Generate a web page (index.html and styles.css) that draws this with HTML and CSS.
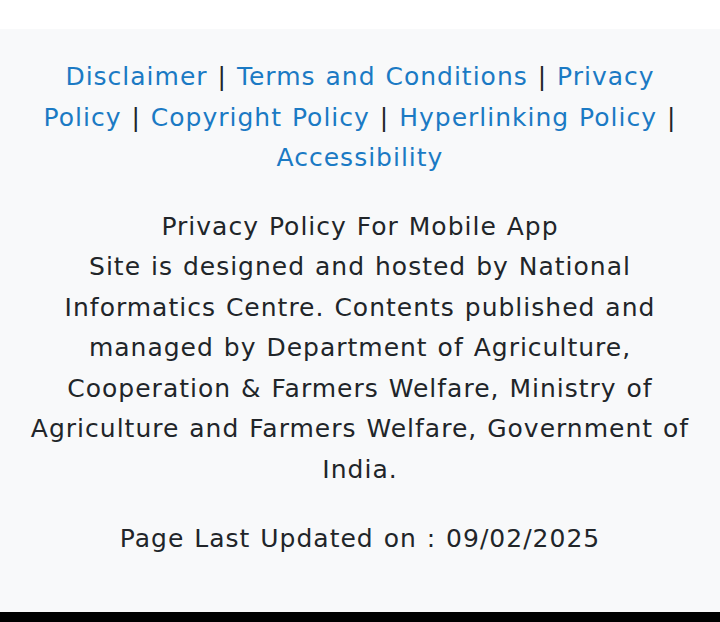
FILE: index.html
```html
<!DOCTYPE html>
<html lang="en">
<head>
<meta charset="utf-8">
<title>Footer</title>
<link rel="stylesheet" href="styles.css">
</head>
<body>
<div class="topband"></div>
<footer class="footer">
  <p class="links">
    <a href="#">Disclaimer</a> | <a href="#">Terms and Conditions</a> | <a href="#">Privacy Policy</a> | <a href="#">Copyright Policy</a> | <a href="#">Hyperlinking Policy</a> | <a href="#">Accessibility</a>
  </p>
  <p class="about">
    Privacy Policy For Mobile App<br>
    Site is designed and hosted by National Informatics Centre. Contents published and managed by Department of Agriculture, Cooperation &amp; Farmers Welfare, Ministry of Agriculture and Farmers Welfare, Government of India.
  </p>
  <p class="updated">Page Last Updated on : 09/02/2025</p>
</footer>
<div class="bottombar"></div>
</body>
</html>
```
FILE: styles.css
```css
html, body {
  margin: 0;
  padding: 0;
  background: #ffffff;
}
body {
  font-family: "DejaVu Sans", "Open Sans", sans-serif;
  color: #212529;
  height: 100vh;
  display: flex;
  flex-direction: column;
}
.topband {
  flex: none;
  height: 29px;
  background: #ffffff;
}
.footer {
  flex: 1;
  background: #f8f9fa;
  padding: 28px 22px 10px;
  text-align: center;
  font-size: 25px;
  line-height: 40.5px;
  letter-spacing: 1px;
  word-spacing: 1px;
}
.footer p {
  margin: 0 0 28px;
}
.footer .updated {
  margin: 29px 0 0;
}
.links {
  color: #212529;
}
.links a {
  color: #1b7ac4;
  text-decoration: none;
}
.bottombar {
  flex: none;
  height: 10px;
  background: #000000;
}
```
